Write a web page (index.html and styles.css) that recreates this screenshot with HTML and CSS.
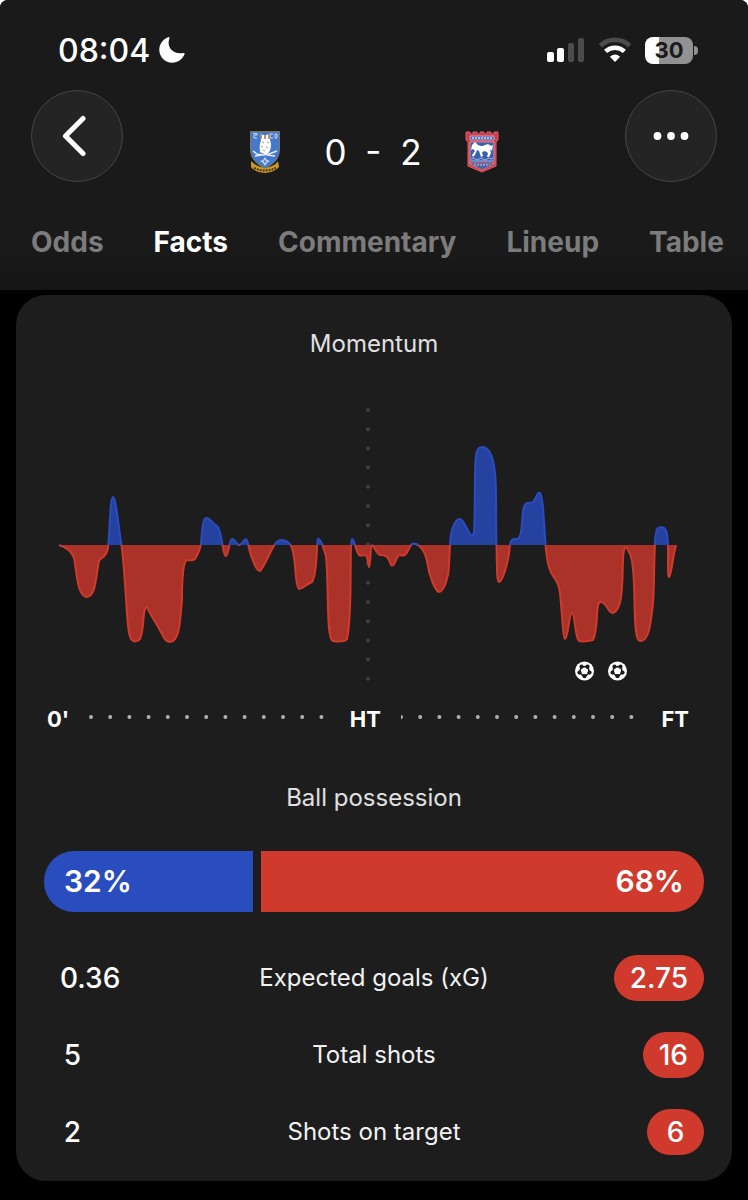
FILE: index.html
```html
<!DOCTYPE html>
<html lang="en">
<head>
    <meta charset="UTF-8">
    <meta name="viewport" content="width=device-width, initial-scale=1.0">
    <title>Match facts</title>
    <link rel="stylesheet" href="styles.css">
</head>
<body>
<div class="app">

    <header class="header">
        <!-- Status bar -->
        <div class="status-bar">
            <div class="status-time">
                <span>08:04</span>
                <svg width="28" height="28" viewBox="0 0 28 28" fill="#fff"><path d="M10 1.3C11 .8 11.8 1.3 11.4 2.5C8.3 10.5 14.5 18.7 25 17.1C26.5 16.9 27 17.5 26.4 18.6C24.1 23.7 19.6 26.7 14.3 26.7C7 26.7 1.3 21.1 1.3 13.8C1.3 8.2 4.7 3.4 10 1.3Z"/></svg>
            </div>
            <div class="status-icons">
                <svg width="38" height="26" viewBox="0 0 38 26">
                    <rect x="0" y="15" width="7" height="10" rx="2" fill="#fff"/>
                    <rect x="10" y="11" width="7" height="14" rx="2" fill="#fff"/>
                    <rect x="21" y="6" width="6" height="19" rx="2" fill="#4c4c4c"/>
                    <rect x="31" y="1" width="6" height="24" rx="2" fill="#4c4c4c"/>
                </svg>
                <svg width="34" height="26" viewBox="0 0 34 26" fill="none" stroke-width="4.6">
                    <path d="M2.3 8.7A21.5 21.5 0 0 1 31.7 8.7" stroke="#4c4c4c"/>
                    <path d="M7.6 14.4A14 14 0 0 1 26.4 14.4" stroke="#fff"/>
                    <path d="M17 25L11.9 19.7Q17 15.5 22.1 19.7Z" fill="#fff"/>
                </svg>
                <div class="battery"><span>30</span></div>
            </div>
        </div>

        <!-- Score -->
        <div class="match-bar">
            <button class="round-button" aria-label="Back">
                <svg width="26" height="42" viewBox="0 0 26 42" fill="none" stroke="#fff" stroke-width="5" stroke-linecap="round" stroke-linejoin="round"><path d="M21 3.5L3.5 21L21 38.5"/></svg>
            </button>
            <div class="score">
                <svg class="crest" width="32" height="44" viewBox="0 0 32 44">
                    <path d="M2 31Q4 33 7 35Q16 40 25 35Q28 33 29 31L30 37Q26 42 16 43Q5 42 2 37Z" fill="#c9982c"/>
                    <path d="M5 38Q16 43 27 38" fill="none" stroke="#4a3412" stroke-width="2" stroke-dasharray="2 1"/>
                    <path d="M1.5 1.5H30.5V19C30.5 29 24 35 16 38C8 35 1.5 29 1.5 19Z" fill="#4679cb" stroke="#7b785a"/>
                    <path d="M4 3.5H8V5H5V8H8M24 4H21V8H24M26 4H28V8H26Z" fill="none" stroke="#c8d6ec"/>
                    <path d="M11 3L14 5H18L21 3V10L22 14Q22 22 17 25L11 22Q10 14 12 11Z" fill="#fff"/>
                    <path d="M12 3V9M20 3V9M16 5V9" stroke="#8c7658" stroke-width="1.5"/>
                    <path d="M13 12L15 13M18 12L20 13M12 16L14 17M17 17L19 18M14 20L16 21" stroke="#8f9ab0"/>
                    <path d="M4 21L8 24L14 25L20 24L28 21M6 26L13 25M18 25L26 26" fill="none" stroke="#e6ecf6" stroke-width="1.5"/>
                    <path d="M16 27L18 30L21 31L18 33L16 36L14 33L11 31L14 30Z" fill="#bdd0ee"/><circle cx="16" cy="31.5" r="1.2" fill="#4679cb"/>
                </svg>
                <span class="score-text">0 - 2</span>
                <svg class="crest" width="34" height="42" viewBox="0 0 34 42">
                    <path d="M1 1H5V3H8V1H12V3H15V1H19V3H22V1H26V3H29V1H33V9L31 11V35L17 41L3 35V11L1 9Z" fill="#d13a48" stroke="#dd5f69"/>
                    <path d="M5 5H29V9H5Z" fill="#4869ad" stroke="#c99bb8"/>
                    <path d="M7 7H27" stroke="#d3dbec" stroke-width="1.5" stroke-dasharray="2 1"/>
                    <path d="M5 11H29V33L17 38L5 33Z" fill="#3b5fae" stroke="#e58c96"/>
                    <path d="M7 14L10 11L13 14Q17 16 20 14Q24 12 26 15L28 14L27 20L25 18L26 22L24 26H22L23 22L20 20L17 21L18 25L16 26L14 20L12 19L10 24L8 26L7 24L10 20L8 18L6 19Z" fill="#fff"/>
                    <path d="M6 28Q8 26 10 28T14 28T18 28T22 28T26 28L28 27M6 30H28" fill="none" stroke="#a3b6dc"/>
                    <path d="M6 32H28V34L17 39L6 34Z" fill="#4d62a3" stroke="#d96c79"/><path d="M9 34H25" stroke="#c5cce4" stroke-dasharray="2 1"/>
                </svg>
            </div>
            <button class="round-button" aria-label="More">
                <svg width="36" height="8" viewBox="0 0 36 8" fill="#fff"><circle cx="4.5" cy="4" r="3.9"/><circle cx="18" cy="4" r="3.9"/><circle cx="31.5" cy="4" r="3.9"/></svg>
            </button>
        </div>

        <nav class="tabs">
            <button class="tab">Odds</button>
            <button class="tab active">Facts</button>
            <button class="tab">Commentary</button>
            <button class="tab">Lineup</button>
            <button class="tab">Table</button>
        </nav>
    </header>

    <main class="card">
        <h2>Momentum</h2>

        <svg class="momentum" viewBox="44 400 660 290" role="img" aria-label="Momentum">
            <defs>
                <clipPath id="home-half"><rect x="44" y="400" width="660" height="145"/></clipPath>
                <clipPath id="away-half"><rect x="44" y="545" width="660" height="145"/></clipPath>
                <path id="curve" d="M59 545
                    C66 547 71 550 74 558 C77 573 77 596 87 597 C96 595 95 581 99 561 C101 556 106 559 108 548
                    C110 529 110 497 113 497 C116 497 119 531 121.500 545
                    C127 588 126 638 132 640 C134 642 138 642 140 639 C145 628 142 607 147 607 C150 615 157 624 162 634 C165 641 168 642 170 642 C179 641 180 625 182 599 C182 583 183 565 186 560.500 C189 559 191 562 195 559 C198 554 200 550 201 544
                    C202 530 203 518 206 518 C210 517 211 523 217 526 C221 530 221 539 223 547 C224 554 225 556 226 556 C229 554 229 540 232 539 C235 539 237 545 239 545 C242 545 244 539 246 539 C248 539 249 552 252 558 C256 570 259 571 260 571 C263 569 270 552 275 544 C280 537 287 541 290 544
                    C297 553 294 586 299 589 C303 589 305 585 312 582 C318 573 316 541 318 539 C321 538 324 550 326 556 C329 587 326 640 333 641 C339 642 345 642 347 639 C353 614 349 541 352 539 C354 538 356 552 359 555 C363 557 366 553 367 557 L369 567 C371 567 370 545 372 545 C374 546 377 555 380 555 C386 555 388 556 391 565 C395 568 396 555 400 555 C408 558 408 547 412 544 C417 542 424 548 427 561 C429 577 436 592 439 592 C444 592 449 576 449 566
                    C450 543 450 534 453 527 Q459 512 465 525 C470 533 472 540 474 532 C476 500 473 456 478 449 C480 446 485 446 489 451 C499 464 495 511 496.500 545 C497 574 497 582 499 582 C502 582 509 563 510 544
                    C512 536 516 541 519 538 C524 531 520 506 527 503 C532 502 533 504 536 497 C540 489 541 492 543 507 C544 523 545 533 545.500 545
                    C549 586 557 570 560 593 C562 611 563 639 565 639 C568 639 569 613 572 613 C575 613 575 639 579 641 C584 642 589 641 593 640 C599 628 595 604 600 602 C607 601 607 613 613 613 C628 608 619 548 626 547 C633 556 633 567 634 584 C635 610 634 641 640 641 C649 642 651 622 653 603 C655 580 653 529 658 528 C663 526 667 527 667.500 539 C669 552 667 577 669 577 C672 573 672 560 676 545"/>
            </defs>
            <line class="half-line" x1="368" y1="410" x2="368" y2="680"/>
            <g clip-path="url(#home-half)"><use href="#curve" class="home-area"/></g>
            <g clip-path="url(#away-half)"><use href="#curve" class="away-area"/></g>
            <!-- Goals -->
            <g id="goal" transform="translate(584.5 671)">
                <circle r="9.5" fill="#fff"/>
                <circle r="4.4" fill="none" stroke="#1d1d1d" stroke-width="1.6"/>
                <g fill="#1d1d1d">
                    <circle cx="-3" cy="-4.300" r="2.100"/>
                    <circle cx="3" cy="-4.300" r="2.100"/>
                    <circle cx="5" cy="1.600" r="2.100"/>
                    <circle cx="0" cy="5.200" r="2.100"/>
                    <circle cx="-5" cy="1.600" r="2.100"/>
                </g>
                <path d="M0 -3.300L3.200 -1L2 2.800H-2L-3.200 -1Z" fill="#fff"/>
            </g>
            <use href="#goal" x="33"/>
        </svg>

        <div class="time-axis">
            <span>0'</span>
            <svg class="dots"><line x1="2" y1="2" x2="100%" y2="2"/></svg>
            <span>HT</span>
            <svg class="dots"><line x1="0" y1="2" x2="100%" y2="2"/></svg>
            <span>FT</span>
        </div>

        <h2>Ball possession</h2>
        <div class="possession" style="grid-template-columns: 32fr 68fr">
            <div class="possession-home">32%</div>
            <div class="possession-away">68%</div>
        </div>

        <table class="stats">
            <tr><td><span class="value">0.36</span></td><th scope="row">Expected goals (xG)</th><td><span class="value best">2.75</span></td></tr>
            <tr><td><span class="value">5</span></td><th scope="row">Total shots</th><td><span class="value best">16</span></td></tr>
            <tr><td><span class="value">2</span></td><th scope="row">Shots on target</th><td><span class="value best">6</span></td></tr>
        </table>
    </main>

</div>
</body>
</html>
```
FILE: styles.css
```css
* {
    box-sizing: border-box;
}
html {
    background-color: #fff;
}
body {
    margin: 0;
    font-family: Inter, "Liberation Sans", sans-serif;
    color: #fff;
}
button {
    padding: 0;
    border: none;
    background: none;
    color: inherit;
    font: inherit;
    cursor: pointer;
}
svg {
    display: block;
    flex-shrink: 0;
}
.app {
    min-height: 100vh;
    padding-bottom: 18px;
    background-color: #000;
    border-radius: 8px 8px 0 0;
    overflow: hidden;
}

/* Header */
.header {
    height: 290px;
    padding-top: 30px;
    background: linear-gradient(#1a1a1a 85%, #151515);
}
.status-bar {
    display: flex;
    justify-content: space-between;
    align-items: center;
    height: 40px;
    padding: 0 50px 0 58px;
}
.status-time {
    display: flex;
    align-items: center;
    gap: 8px;
    font-size: 32px;
    font-weight: 500;
}
.status-icons {
    display: flex;
    align-items: center;
    gap: 13px;
}
.battery {
    position: relative;
    width: 48px;
    height: 27px;
    margin-right: 5px;
    border-radius: 8px;
    background: linear-gradient(90deg, #fff 30%, #929292 30%);
    color: #1a1a1a;
    font-size: 22px;
    font-weight: 700;
    line-height: 27px;
    text-align: center;
}
.battery::after {
    content: "";
    position: absolute;
    left: 49px;
    top: 9px;
    width: 4px;
    height: 9px;
    border-radius: 0 4px 4px 0;
    background-color: #929292;
}
.match-bar {
    display: flex;
    justify-content: space-between;
    margin-top: 20px;
    padding: 0 31px;
}
.round-button {
    display: flex;
    align-items: center;
    justify-content: center;
    width: 92px;
    height: 92px;
    border: 1px solid #454547;
    border-radius: 50%;
    background-color: #242425;
}
.round-button:first-child {
    padding-right: 4px;
}
.score {
    display: flex;
    align-items: center;
    gap: 43px;
    height: 92px;
    padding-top: 32px;
}
.score-text {
    font-size: 35px;
    word-spacing: 9px;
}
.tabs {
    display: flex;
    gap: 50px;
    margin-top: 42px;
    padding-left: 31px;
    overflow: hidden;
}
.tab {
    color: #7c7c7c;
    font-size: 28px;
    font-weight: 700;
    line-height: 36px;
}
.tab.active {
    color: #fff;
}

/* Card */
.card {
    margin: 5px 16px 0;
    padding: 33px 28px 11px;
    border-radius: 30px;
    background-color: #1d1d1d;
}
h2 {
    margin: 0;
    color: #e0e0e0;
    font-size: 24px;
    font-weight: 400;
    line-height: 32px;
    text-align: center;
}
.momentum {
    width: 100%;
    margin-top: 40px;
}
.half-line {
    stroke: #414141;
    stroke-width: 4;
    stroke-linecap: round;
    stroke-dasharray: 0 19.2;
}
.home-area {
    fill: #2542a0;
    stroke: #2b4cc0;
    stroke-width: 2;
}
.away-area {
    fill: #aa3228;
    stroke: #d03a2c;
    stroke-width: 2;
}
.time-axis {
    display: grid;
    grid-template-columns: auto 1fr auto 1fr auto;
    align-items: center;
    margin-top: 15px;
    padding: 0 15px 0 3px;
    font-size: 22px;
    font-weight: 700;
    line-height: 28px;
}
.dots {
    width: calc(100% - 42px);
    height: 8px;
    margin-left: 20px;
}
.dots line {
    stroke: #b0b0b0;
    stroke-width: 4;
    stroke-linecap: round;
    stroke-dasharray: 0 19.2;
}
.time-axis + h2 {
    margin-top: 49px;
}
.possession {
    display: grid;
    gap: 8px;
    margin-top: 37px;
    font-size: 30px;
    font-weight: 600;
    line-height: 61px;
}
.possession-home {
    padding-left: 20px;
    border-radius: 30px 0 0 30px;
    background-color: #294dbf;
}
.possession-away {
    padding-right: 20px;
    border-radius: 0 30px 30px 0;
    background-color: #d03a2c;
    text-align: right;
}
.stats {
    width: 100%;
    margin-top: 27px;
    border-collapse: collapse;
    table-layout: fixed;
}
.stats td,
.stats th {
    height: 77px;
    padding: 0;
}
.stats th {
    width: 44%;
    color: #f2f2f2;
    font-size: 24px;
    font-weight: 400;
}
.stats td:last-child {
    text-align: right;
}
.value {
    display: inline-block;
    min-width: 57px;
    padding: 0 16px;
    border-radius: 23px;
    font-size: 28px;
    font-weight: 500;
    line-height: 46px;
    text-align: center;
}
.value.best {
    background-color: #d03a2c;
}
```
